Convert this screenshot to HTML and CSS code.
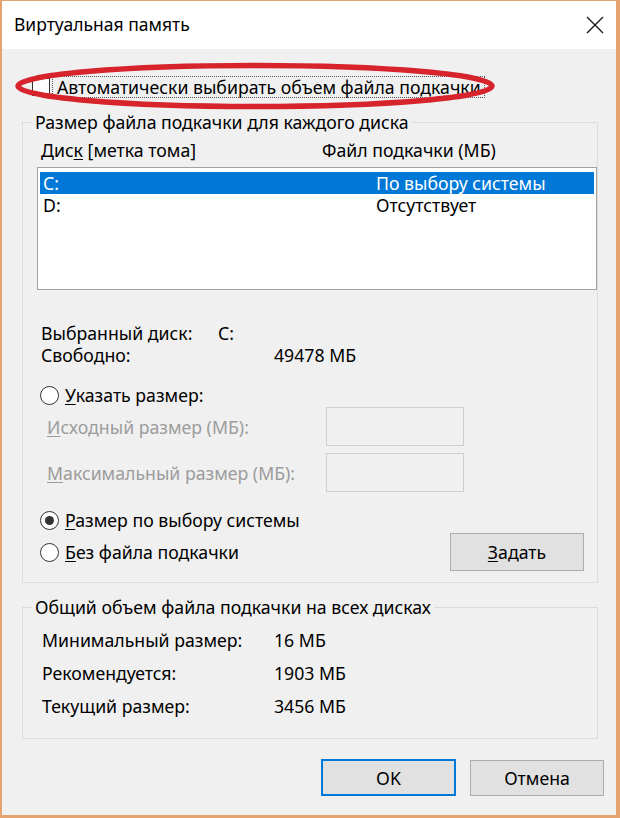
FILE: index.html
```html
<!DOCTYPE html>
<html lang="ru">
<head>
<meta charset="utf-8">
<title>Виртуальная память</title>
<link rel="stylesheet" href="styles.css">
</head>
<body>
<div class="window">
  <div class="titlebar">
    <span class="title">Виртуальная память</span>
    <svg class="close" width="18" height="18" viewBox="0 0 18 18"><path d="M1 1 L17 17 M17 1 L1 17" stroke="#1a1a1a" stroke-width="1.4" fill="none"/></svg>
  </div>
  <div class="body">
    <div class="auto-row">
      <span class="checkbox"></span>
      <span class="auto-label"><u>А</u>втоматически выбирать объем файла подкачки</span>
    </div>

    <fieldset class="group group-disk">
      <legend>Размер файла подкачки для каждого диска</legend>
      <div class="cols">
        <span class="col-a">Дис<u>к</u> [метка тома]</span>
        <span class="col-b">Файл подкачки (МБ)</span>
      </div>
      <div class="listbox">
        <div class="row selected"><span class="col-a">C:</span><span class="col-b">По выбору системы</span></div>
        <div class="row"><span class="col-a">D:</span><span class="col-b">Отсутствует</span></div>
      </div>
      <div class="info">
        <div class="kv"><span class="k k-disk">Выбранный диск:</span><span class="v">C:</span></div>
        <div class="kv"><span class="k k-free">Свободно:</span><span class="v">49478 МБ</span></div>
      </div>
      <label class="radio-row first">
        <span class="radio"></span><span><u>У</u>казать размер:</span>
      </label>
      <div class="field-row">
        <span class="field-label"><u>И</u>сходный размер (МБ):</span>
        <span class="textbox"></span>
      </div>
      <div class="field-row second">
        <span class="field-label"><u>М</u>аксимальный размер (МБ):</span>
        <span class="textbox"></span>
      </div>
      <label class="radio-row system">
        <span class="radio checked"></span><span><u>Р</u>азмер по выбору системы</span>
      </label>
      <div class="last-row">
        <label class="radio-row">
          <span class="radio"></span><span><u>Б</u>ез файла подкачки</span>
        </label>
        <span class="button set"><u>З</u>адать</span>
      </div>
    </fieldset>

    <fieldset class="group group-total">
      <legend>Общий объем файла подкачки на всех дисках</legend>
      <div class="totals">
        <div class="kv"><span class="k">Минимальный размер:</span><span class="v">16 МБ</span></div>
        <div class="kv"><span class="k">Рекомендуется:</span><span class="v">1903 МБ</span></div>
        <div class="kv"><span class="k">Текущий размер:</span><span class="v">3456 МБ</span></div>
      </div>
    </fieldset>

    <div class="actions">
      <span class="button ok">OK</span>
      <span class="button cancel">Отмена</span>
    </div>
  </div>

  <svg class="annotation" width="486" height="54" viewBox="0 0 486 54">
    <ellipse cx="242" cy="26" rx="237" ry="20.5" fill="none" stroke="#d6232c" stroke-width="5.5"/>
  </svg>
</div>
</body>
</html>
```

FILE: styles.css
```css
* { box-sizing: border-box; }

html, body {
  margin: 0;
  padding: 0;
  background: #f0f0f0;
}

body {
  font-family: "Noto Sans", "Open Sans", sans-serif;
  font-size: 17.7px;
  color: #000;
}

u { text-decoration: underline; text-underline-offset: 2px; text-decoration-thickness: 1px; }

.window {
  position: relative;
  width: 620px;
  height: 818px;
  border-style: solid;
  border-color: #e5a36e;
  border-width: 1px 4px 3px 2px;
  background: #f0f0f0;
  overflow: hidden;
}

.titlebar {
  height: 48px;
  background: #fff;
  display: flex;
  align-items: center;
  justify-content: space-between;
  padding: 0 12px 2px 12px;
}

.title {
  font-size: 17.5px;
}

.close {
  display: block;
  margin-top: 2px;
}

.body {
  padding: 27px 12px 0 20px;
}

.auto-row {
  height: 22px;
  display: flex;
  align-items: center;
}

.checkbox {
  width: 18px;
  height: 18px;
  margin-left: 10px;
  border: 1px solid #333;
  background: #fff;
}

.auto-label {
  margin-left: 2px;
  padding: 0 3px 0 4px;
  line-height: 20px;
  border: 1px dotted #555;
}

.group {
  margin: 13px 6px 0 0;
  padding: 0 0 11px 0;
  border: 1px solid #dcdcdc;
  min-width: 0;
}

.group legend {
  margin-left: 9px;
  padding: 0 3px;
  line-height: 22px;
}

.cols, .row {
  display: flex;
  line-height: 22px;
}

.cols {
  margin-top: 6px;
  padding-left: 18px;
}

.cols .col-a { width: 281px; }

.listbox {
  margin: 6px 0 0 14px;
  height: 123px;
  border: 1px solid #a3a3a3;
  background: #fff;
  padding: 4px 2px;
}

.row {
  padding-left: 3px;
}

.row .col-a { width: 333px; }

.row.selected {
  background: #0078d7;
  color: #fff;
}

.info {
  margin-top: 32px;
  padding-left: 18px;
}

.kv {
  display: flex;
  line-height: 22px;
}

.info .k-disk { width: 177px; }
.info .k-free { width: 233px; }

.radio-row {
  display: flex;
  align-items: center;
  line-height: 22px;
  margin-left: 17px;
}

.radio-row.first { margin-top: 18px; }
.radio-row.system { margin-top: 17px; }

.radio {
  flex: none;
  width: 19px;
  height: 19px;
  border: 1px solid #333;
  border-radius: 50%;
  background: #fff;
  margin-right: 6px;
  display: flex;
  align-items: center;
  justify-content: center;
}

.radio.checked::after {
  content: "";
  width: 9px;
  height: 9px;
  border-radius: 50%;
  background: #333;
}

.field-row {
  display: flex;
  align-items: center;
  margin-top: 1px;
  padding-left: 24px;
  color: #9c9c9c;
}

.field-row.second { margin-top: 7px; }

.field-label {
  width: 279px;
}

.textbox {
  width: 138px;
  height: 39px;
  border: 1px solid #cfcfcf;
  background: #f0f0f0;
}

.last-row {
  display: flex;
  align-items: center;
  justify-content: space-between;
  margin-top: 2px;
  padding-right: 13px;
}

.button {
  display: flex;
  align-items: center;
  justify-content: center;
  background: #e1e1e1;
  border: 1px solid #adadad;
}

.button.set {
  width: 134px;
  height: 38px;
}

.group-total {
  padding-bottom: 21px;
}

.totals {
  margin-top: 11px;
  padding-left: 19px;
  display: flex;
  flex-direction: column;
  gap: 11px;
}

.totals .k { width: 232px; }

.actions {
  margin-top: 20px;
  display: flex;
  justify-content: flex-end;
  gap: 14px;
}

.button.ok {
  width: 135px;
  height: 37px;
  border: 2px solid #0078d7;
}

.button.cancel {
  width: 134px;
  height: 36px;
  margin-top: 1px;
}

.annotation {
  position: absolute;
  left: 11px;
  top: 59px;
}
```
